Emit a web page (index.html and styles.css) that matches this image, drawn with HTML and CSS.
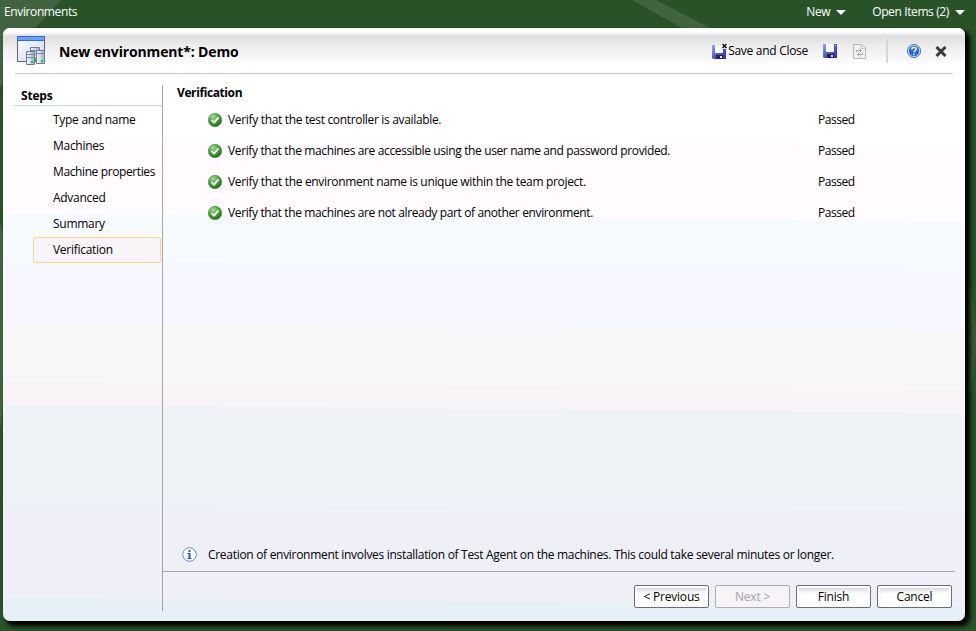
FILE: index.html
```html
<!DOCTYPE html>
<html lang="en">
<head>
<meta charset="utf-8">
<title>Environments</title>
<link rel="stylesheet" href="styles.css">
</head>
<body>
<svg class="symbols" width="0" height="0" aria-hidden="true">
  <defs>
    <radialGradient id="green" cx="35%" cy="25%" r="80%"><stop offset="0" stop-color="#a6d99b"/><stop offset=".5" stop-color="#4ba43c"/><stop offset="1" stop-color="#216c17"/></radialGradient>
    <linearGradient id="disk" x1="0" y1="0" x2="1" y2="1"><stop offset="0" stop-color="#a0a8f0"/><stop offset=".5" stop-color="#5058c8"/><stop offset="1" stop-color="#2c30a0"/></linearGradient>
    <linearGradient id="pane" x1="0" y1="0" x2="1" y2="1"><stop offset="0" stop-color="#fff"/><stop offset="1" stop-color="#ccd8ec"/></linearGradient>
    <linearGradient id="server"><stop offset="0" stop-color="#fff"/><stop offset="1" stop-color="#9cabc2"/></linearGradient>
    <symbol id="check" viewBox="0 0 14 14"><circle cx="7" cy="7" r="6.7" fill="url(#green)" stroke="#3b7c35" stroke-width=".6"/><path d="M3.6 7.2 6 9.6 10.6 4.4" fill="none" stroke="#fff" stroke-width="1.8"/></symbol>
    <symbol id="floppy" viewBox="0 0 14 14"><path d="M0 0H14V14H1L0 13Z" fill="url(#disk)"/><path d="M3 0H11V8H3Z" fill="#f7faff"/><path d="M4 10H11V14H4Z" fill="#20254f"/><path d="M8 11H10V13H8Z" fill="#e2e5ee"/><path d="M12 1H13V2H12Z" fill="#fff"/></symbol>
  </defs>
</svg>
<svg class="backdrop" width="976" height="631" aria-hidden="true">
  <g fill="#42633f"><path d="M0 0H61L35 28 0 88Z"/><path d="M632 0H656L710 28H682Z"/><path d="M0 222Q4 235 4 250V400L0 430Z"/><path d="M968 280Q984 340 968 400Z" opacity=".6"/></g>
</svg>
<header class="topbar">
  <span class="crumb">Environments</span>
  <span class="menu new">New</span>
  <span class="menu open">Open Items (2)</span>
</header>
<main class="window">
  <div class="titlebar">
    <svg class="env-icon" width="29" height="30" viewBox="0 0 29 30">
      <path d="M.5.5H27.5V25.5H.5Z" fill="url(#pane)" stroke="#51658b"/>
      <path d="M0 0H28V5H0Z" fill="#2f6bdc"/><path d="M1 1H27V4H1Z" fill="#6c9ffa"/>
      <g fill="url(#server)" stroke="#6d7c96"><path d="M13.5 11.5H22.5V24.5H13.5Z"/><path d="M19.5 14.5H27.5V27.5H19.5Z"/><path d="M9.500 15.500H17.500V28.500H9.500Z"/></g>
      <path d="M14 14.500H22M20 17.500H27M10 18.500H17M10 21.500H17" stroke="#7685a0"/>
      <path d="M14 25H16V27H14ZM24 24H26V26H24ZM18 22H20V24H18Z" fill="#00d816"/>
    </svg>
    <h1>New environment*: Demo</h1>
    <div class="tools">
      <span class="save-close">
        <svg width="16" height="16" viewBox="0 0 16 16"><use href="#floppy" y="2" width="14" height="14"/><path d="M9 0H16V6H9Z" fill="#f5f4f5"/><path d="M10.500 1 14.500 5M14.500 1 10.500 5" stroke="#111" stroke-width="1.5"/></svg><span class="save-text">Save and Close</span>
      </span>
      <svg class="save" width="14" height="14"><use href="#floppy" width="14" height="14"/></svg>
      <svg class="refresh" width="13" height="15" viewBox="0 0 13 15"><path d="M.5.5H9L12.500 4V14.500H.5Z" fill="#f1f1f1" stroke="#b9b9b9"/><path d="M8.500.5V4.500H12.500" fill="none" stroke="#c4c4c4"/><path d="M3.500 8V6.500H8M6.500 4.500 8.500 6.500 6.500 8.500M9.500 8.500V10.500H5M6.500 8.500 4.500 10.500 6.500 12.500" fill="none" stroke="#a2a2a2"/></svg>
      <i class="divider"></i>
      <svg class="help" width="14" height="14" viewBox="0 0 14 14"><circle cx="7" cy="7" r="6.500" fill="#e6f0ff" stroke="#3467c4"/><circle cx="7" cy="7" r="5.200" fill="#2464d8"/><path d="M4.800 5.500C4.800 2.700 9.300 2.900 9.200 5.300 9.100 6.700 7 6.700 7 8.500M7 9.700V11.200" fill="none" stroke="#fff" stroke-width="1.500"/></svg>
      <svg class="close" width="12" height="11" viewBox="0 0 12 11"><path d="M1.500 1 10.500 10M10.500 1 1.500 10" stroke="#3c3c3c" stroke-width="3"/></svg>
    </div>
  </div>
  <div class="body">
    <nav>
      <h2>Steps</h2>
      <ol>
        <li><span>Type and name</span></li>
        <li><span>Machines</span></li>
        <li><span class="long">Machine properties</span></li>
        <li><span>Advanced</span></li>
        <li><span>Summary</span></li>
        <li class="current"><span>Verification</span></li>
      </ol>
    </nav>
    <section>
      <h2 class="heading">Verification</h2>
      <ul class="checks">
        <li><svg width="14" height="14"><use href="#check"/></svg><span class="c1">Verify that the test controller is available.</span><b>Passed</b></li>
        <li><svg width="14" height="14"><use href="#check"/></svg><span class="c2">Verify that the machines are accessible using the user name and password provided.</span><b>Passed</b></li>
        <li><svg width="14" height="14"><use href="#check"/></svg><span class="c3">Verify that the environment name is unique within the team project.</span><b>Passed</b></li>
        <li><svg width="14" height="14"><use href="#check"/></svg><span class="c4">Verify that the machines are not already part of another environment.</span><b>Passed</b></li>
      </ul>
      <div class="note">
        <svg width="15" height="15" viewBox="0 0 15 15"><circle cx="7.500" cy="7.500" r="6.800" fill="#fbfdff" stroke="#7186b6"/><path d="M6.500 3H8.500V5H6.500ZM5.500 6H8.500V11H9.500V12H5.500V11H6.500V7H5.500Z" fill="#2856bd"/></svg>
        <span>Creation of environment involves installation of Test Agent on the machines. This could take several minutes or longer.</span>
      </div>
      <footer>
        <button>&lt; Previous</button>
        <button disabled>Next &gt;</button>
        <button>Finish</button>
        <button>Cancel</button>
      </footer>
    </section>
  </div>
</main>
</body>
</html>
```
FILE: styles.css
```css
* { box-sizing: border-box; }
body {
  margin: 0; width: 976px; height: 631px; overflow: hidden;
  display: flex; flex-direction: column;
  font: 12px/16px "Open Sans", "Noto Sans", sans-serif; color: #000;
  background: #295229;
}
h1, h2, ol, ul { margin: 0; padding: 0; list-style: none; }
svg { flex: none; }
.symbols { position: absolute; }
.backdrop { position: absolute; z-index: -1; top: 0; left: 0; }
.topbar { height: 28px; flex: none; display: flex; align-items: flex-start; padding: 4px 11px 0 4px; color: #fff; letter-spacing: -.38px; }
.crumb { margin-right: auto; }
.menu { display: flex; align-items: center; gap: 6px; }
.menu::after { content: ""; border: 5px solid transparent; border-top: 5px solid #fff; border-bottom: 0; }
.open { margin-left: 26px; }
.window {
  width: 962px; height: 593px; margin-left: 3px; border-radius: 7px; display: flex; flex-direction: column;
  background: linear-gradient(180.500deg, #fff 0 120px, #fffbff 120px 193px, #f7fbff 193px 241px, #f7f7ff 241px 302px, #f7f7f7 302px 362px, #f7f3f7 362px 385px, #eff3f7 385px 483px, #efeff7 483px 578px, #e7eff7 578px);
  box-shadow: 4px 4px 4px 1px #000;
}
.titlebar { height: 46px; flex: none; margin: 0; display: flex; padding: 8px 18px 0 14px; border-radius: 7px 7px 0 0; background: linear-gradient(#fff 0 4px, #dedede 8px, #efeff0 20px, #fff 38px); position: relative; }
.titlebar::after { content: ""; position: absolute; left: 12px; right: 12px; bottom: 0; border-bottom: 1px solid #c8c8c8; }
h1 { font-size: 14px; line-height: 20px; margin: 6px 0 0 13px; letter-spacing: -.15px; }
.tools { margin-left: auto; display: flex; align-items: flex-start; }
.save-close { display: flex; margin-top: 7px; letter-spacing: -.29px; }
.save { margin: 8px 0 0 15px; }
.refresh { margin: 8px 0 0 16px; }
.divider { width: 2px; height: 24px; background: #d6d6d8; margin: 3px 0 0 20px; }
.help { margin: 8px 0 0 19px; }
.close { margin: 10px 0 0 14px; }
.body { flex: 1; display: flex; min-height: 0; padding: 11px 10px 10px; }
nav { width: 150px; border-right: 1px solid #a5a5a5; }
h2 { font-size: 12px; line-height: 16px; letter-spacing: -.2px; }
nav h2 { height: 21px; padding: 3px 0 0 8px; border-bottom: 1px solid #bdd7ef; }
nav ol { padding: 1px 1px 0 20px; }
nav li { height: 26px; padding: 4px 0 0 19px; border: 1px solid transparent; white-space: nowrap; letter-spacing: -.28px; }
.long { letter-spacing: -.39px; }
nav .current { border-color: #f7d78c; border-radius: 2px; background: #f7f3f7; }
section { flex: 1; display: flex; flex-direction: column; white-space: nowrap; }
.heading { padding-left: 14px; letter-spacing: -.4px; }
.checks { margin-top: 3px; padding-left: 45px; }
.checks li { height: 31px; display: flex; align-items: center; }
.checks li span { width: 590px; margin-left: 6px; }
.c1, .c3 { letter-spacing: -.33px; }
.c2, .c4 { letter-spacing: -.37px; }
.checks b { font-weight: 400; letter-spacing: -.45px; }
.note { margin-top: auto; height: 33px; flex: none; display: flex; align-items: center; gap: 11px; padding-left: 19px; border-bottom: 1px solid #a5a5a5; letter-spacing: -.3px; }
.note svg { margin-bottom: 1px; }
footer { height: 39px; flex: none; display: flex; justify-content: flex-end; gap: 6px; padding: 13px 3px 0 0; }
button { width: 75px; height: 23px; padding: 0; font: inherit; letter-spacing: -.2px; color: #000; border: 1px solid #6b6b80; border-radius: 2px; background: #fff; box-shadow: inset 0 0 0 2px #fff, inset 0 4px 5px #d2d2d6; }
button:disabled { color: #a0a0a6; border-color: #adadb8; background: #f7f3f7; box-shadow: none; }
```
